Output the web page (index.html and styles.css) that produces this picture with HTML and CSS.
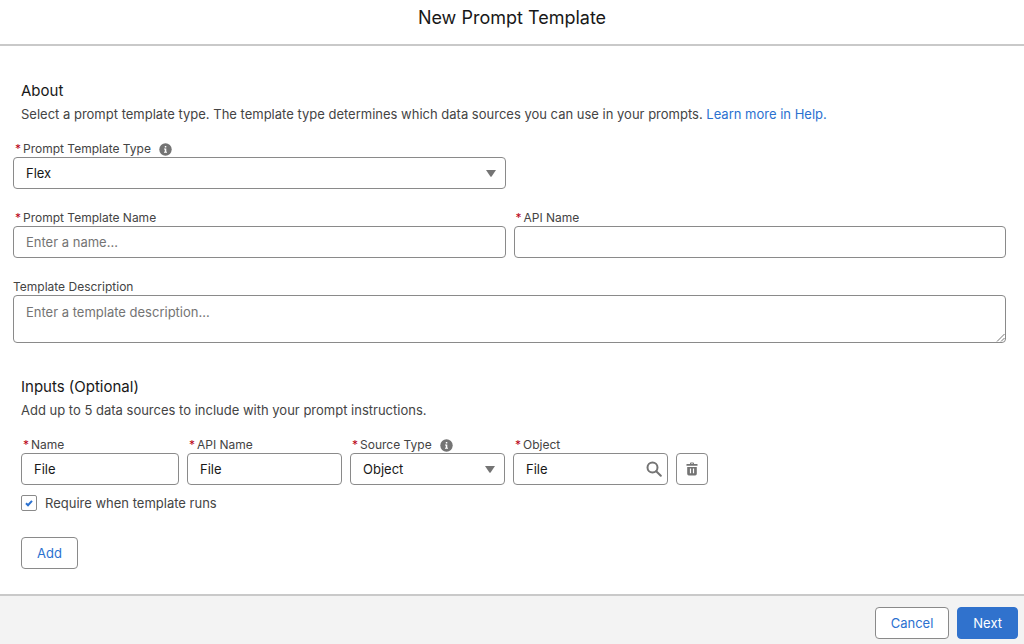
FILE: index.html
```html
<!DOCTYPE html>
<html lang="en">
<head>
<meta charset="utf-8">
<meta name="viewport" content="width=device-width, initial-scale=1">
<title>New Prompt Template</title>
<link rel="stylesheet" href="styles.css">
</head>
<body>
<form class="modal">
  <header class="modal-header"><h1 class="modal-title">New Prompt Template</h1></header>
  <main class="modal-body">
    <section class="section">
      <div class="intro">
        <h2 class="section-title">About</h2>
        <p class="section-text">Select a prompt template type. The template type determines which data sources you can use in your prompts. <a class="link" href="#">Learn more in Help.</a></p>
      </div>
      <div class="fields">
        <div class="field">
          <div class="label-row">
            <label class="label" for="type"><span class="required">*</span>Prompt Template Type</label>
            <svg class="info" viewBox="0 0 13 13" aria-hidden="true"><circle cx="6.5" cy="6.5" r="6.2"/><path d="M5.8 3h1.5v1.5H5.8zM5 5.5h2.3v3.2H8v1H5v-1h.8V6.4H5z"/></svg>
          </div>
          <div class="control">
            <select class="input select" id="type"><option>Flex</option></select>
            <svg class="arrow" viewBox="0 0 10 7" aria-hidden="true"><path d="M0 0h10L5.6 6.4Q5 7.2 4.4 6.4z"/></svg>
          </div>
        </div>
        <div class="field field-start">
          <div class="label-row"><label class="label" for="template-name"><span class="required">*</span>Prompt Template Name</label></div>
          <input class="input" id="template-name" type="text" placeholder="Enter a name...">
        </div>
        <div class="field">
          <div class="label-row"><label class="label" for="template-api"><span class="required">*</span>API Name</label></div>
          <input class="input" id="template-api" type="text">
        </div>
        <div class="field field-wide">
          <div class="label-row label-plain"><label class="label" for="description">Template Description</label></div>
          <div class="control">
            <textarea class="input textarea" id="description" placeholder="Enter a template description..."></textarea>
            <svg class="grip" viewBox="0 0 9 9" aria-hidden="true"><path d="M1 8.5 8.5 1M5 8.5 8.5 5"/></svg>
          </div>
        </div>
      </div>
    </section>
    <section class="section">
      <div class="intro">
        <h2 class="section-title">Inputs (Optional)</h2>
        <p class="section-text">Add up to 5 data sources to include with your prompt instructions.</p>
      </div>
      <div class="source">
        <div class="field">
          <div class="label-row"><label class="label" for="source-name"><span class="required">*</span>Name</label></div>
          <input class="input" id="source-name" type="text" value="File">
        </div>
        <div class="field">
          <div class="label-row"><label class="label" for="source-api"><span class="required">*</span>API Name</label></div>
          <input class="input" id="source-api" type="text" value="File">
        </div>
        <div class="field">
          <div class="label-row">
            <label class="label" for="source-type"><span class="required">*</span>Source Type</label>
            <svg class="info" viewBox="0 0 13 13" aria-hidden="true"><circle cx="6.5" cy="6.5" r="6.2"/><path d="M5.8 3h1.5v1.5H5.8zM5 5.5h2.3v3.2H8v1H5v-1h.8V6.4H5z"/></svg>
          </div>
          <div class="control">
            <select class="input select" id="source-type"><option>Object</option></select>
            <svg class="arrow" viewBox="0 0 10 7" aria-hidden="true"><path d="M0 0h10L5.6 6.4Q5 7.2 4.4 6.4z"/></svg>
          </div>
        </div>
        <div class="field">
          <div class="label-row"><label class="label" for="source-object"><span class="required">*</span>Object</label></div>
          <div class="control">
            <input class="input lookup" id="source-object" type="text" value="File">
            <svg class="search" viewBox="0 0 16 16" aria-hidden="true"><circle cx="6.5" cy="6.500" r="5"/><path d="m10.200 10.200 4.600 4.600"/></svg>
          </div>
        </div>
        <button class="button delete" type="button" aria-label="Delete">
          <svg class="trash" viewBox="0 0 12 14" aria-hidden="true"><path fill-rule="evenodd" d="M4 2V1.4Q4 .4 5 .4h2q1 0 1 1V2h3q.6 0 .6.6v.6q0 .5-.6.5H1q-.6 0-.6-.5v-.6Q.4 2 1 2zm1 0h2v-.6H5zM1.200 5h9.600v6.800q0 1.600-1.600 1.600H2.800q-1.600 0-1.600-1.600zm2.700 1.500v4.800h1.200V6.500zm3 0v4.800h1.200V6.500z"/></svg>
        </button>
      </div>
      <div class="require">
        <span class="check-box">
          <input class="checkbox" id="require" type="checkbox" checked>
          <svg class="check" viewBox="0 0 8 8" aria-hidden="true"><path d="M1 4.300 3 6.200 7 1.800"/></svg>
        </span>
        <label for="require">Require when template runs</label>
      </div>
      <button class="button add" type="button">Add</button>
    </section>
  </main>
  <footer class="modal-footer">
    <button class="button" type="button">Cancel</button>
    <button class="button primary" type="submit">Next</button>
  </footer>
</form>
</body>
</html>
```
FILE: styles.css
```css
* { box-sizing: border-box; }
body {
  margin: 0;
  background: #fff;
  color: #444;
  font-family: Inter, "Liberation Sans", sans-serif;
  font-size: 13px;
  line-height: 20px;
}
.modal { display: flex; flex-direction: column; min-height: 100vh; }
.modal-header { padding: 6px 16px 14px; border-bottom: 2px solid #c9c9c9; text-align: center; }
.modal-title { margin: 0; color: #181818; font-size: 18px; font-weight: 400; line-height: 24px; }
.modal-body { flex: 1; padding: 35px 18px 24px 13px; }
.section + .section { margin-top: 34px; }
.intro { padding-left: 8px; }
.section-title { margin: 0; color: #181818; font-size: 15px; font-weight: 400; line-height: 20px; }
.section-text { margin: 3px 0 0; line-height: 20px; }
.link { color: #2b71d0; text-decoration: none; }
.fields { display: grid; grid-template-columns: 1fr 1fr; gap: 20px 8px; margin-top: 16px; }
.field { min-width: 0; }
.field-start { grid-column: 1; }
.field-wide { grid-column: 1 / -1; }
.label-row { display: flex; align-items: center; gap: 8px; height: 17px; padding-left: 2px; }
.label-plain { padding-left: 0; }
.fields .label-row { height: 17px; }
.label { font-size: 12px; line-height: 16px; white-space: nowrap; }
.required { margin-right: 2px; color: #ba0517; font-size: 12px; line-height: 12px; }
.info { width: 13px; height: 13px; margin-top: 2px; fill: #747474; }
.info path { fill: #fff; }
.control { position: relative; }
.input {
  display: block;
  width: 100%;
  height: 32px;
  padding: 0 12px;
  border: 1px solid #8a8a8a;
  border-radius: 4px;
  background: #fff;
  color: #181818;
  font: inherit;
}
.input::placeholder { color: #747474; opacity: 1; }
.select { appearance: none; }
.arrow { position: absolute; top: 13px; right: 10px; width: 10px; height: 7px; fill: #747474; pointer-events: none; }
.textarea { height: 48px; padding-top: 6px; resize: none; }
.grip { position: absolute; right: 1px; bottom: 1px; width: 9px; height: 9px; stroke: #747474; pointer-events: none; }
.source {
  display: grid;
  grid-template-columns: 158fr 155fr 155fr 155fr 32px 290fr;
  gap: 8px;
  align-items: end;
  margin: 16px 0 0 8px;
}
.lookup { padding-right: 32px; }
.search { position: absolute; top: 8px; right: 6px; width: 16px; height: 16px; fill: none; stroke: #747474; stroke-width: 2; stroke-linecap: round; }
.button {
  height: 32px;
  padding: 0 15px;
  border: 1px solid #8a8a8a;
  border-radius: 4px;
  background: #fff;
  color: #2b71d0;
  font: inherit;
}
.primary { border-color: #3072cd; background: #3072cd; color: #fff; }
.delete { display: grid; place-items: center; padding: 0; }
.trash { width: 12px; height: 14px; fill: #747474; }
.require { display: flex; align-items: center; gap: 8px; width: fit-content; margin: 8px 0 0 8px; }
.check-box { position: relative; display: block; width: 16px; height: 16px; }
.checkbox {
  display: block;
  width: 16px;
  height: 16px;
  margin: 0;
  border: 1px solid #8a8a8a;
  border-radius: 2px;
  background: #fff;
  appearance: none;
}
.check { position: absolute; inset: 4px; width: 8px; height: 8px; fill: none; stroke: #2b71d0; stroke-width: 2; visibility: hidden; pointer-events: none; }
.checkbox:checked + .check { visibility: visible; }
.add { display: block; margin: 24px 0 0 8px; }
.modal-footer {
  display: flex;
  justify-content: flex-end;
  gap: 8px;
  padding: 11px 6px 5px;
  border-top: 2px solid #c9c9c9;
  background: #f3f3f3;
}
```
